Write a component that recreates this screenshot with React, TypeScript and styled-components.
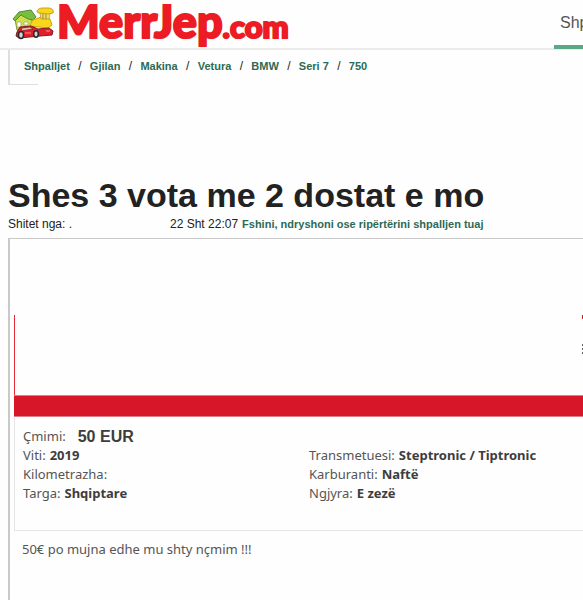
import React, { Fragment } from "react";
import styled, { createGlobalStyle } from "styled-components";

const GlobalStyle = createGlobalStyle`
  *, *::before, *::after { box-sizing: border-box; }
  body {
    margin: 0;
    background: #fefefe;
    color: #222;
    font-family: "Liberation Sans", Arial, sans-serif;
    overflow-x: hidden;
  }
`;

const Page = styled.div`
  display: flex;
  flex-direction: column;
  min-height: 100vh;
`;

const Header = styled.header`
  display: flex;
  justify-content: space-between;
  height: 50px;
  border-bottom: 2px solid #ebebeb;
`;

const Logo = styled.a`
  display: flex;
  align-items: flex-start;
  padding-left: 12px;
  color: #ed1c24;
  text-decoration: none;
  font-family: Lato, "Open Sans", sans-serif;
  font-weight: 900;
  white-space: nowrap;
  -webkit-text-stroke: 2px #ed1c24;
  text-shadow: 0 0 1px #8d1a1e, 0 1px 1px #b9777a;
`;

const LogoArt = styled.svg`
  flex: none;
  width: 42px;
  height: 34px;
  margin: 7px 3px 0 0;
`;

const LogoWords = styled.span`
  display: flex;
  align-items: baseline;
`;

const LogoName = styled.span`
  font-size: 45px;
  line-height: 42px;
`;

const LogoSuffix = styled.span`
  font-size: 31px;
  line-height: 42px;
`;

const Nav = styled.nav`
  display: flex;
  width: 29px;
  overflow: hidden;
  height: 49px;
`;

const NavLink = styled.a`
  flex: none;
  padding: 13px 6px 0;
  border-bottom: 4px solid #5aa982;
  color: #555;
  font-size: 16px;
  line-height: 20px;
  text-decoration: none;
`;

const Crumbs = styled.nav`
  position: relative;
  display: flex;
  gap: 8px;
  height: 35px;
  margin-left: 8px;
  padding: 9px 0 0 14px;
  border-left: 2px solid #dedede;
  font-size: 12px;
  line-height: 14px;

  &::after {
    content: "";
    position: absolute;
    left: 0;
    bottom: 0;
    width: 28px;
    height: 1px;
    background: #dedede;
  }
`;

const Separator = styled.span`
  width: 4px;
  text-align: center;
`;

const GreenLink = styled.a`
  color: #2d6a55;
  font-size: 11px;
  font-weight: bold;
  text-decoration: none;
`;

const Main = styled.main`
  display: flex;
  flex: 1;
  flex-direction: column;
  padding: 90px 0 0 8px;
`;

const Title = styled.h1`
  margin: 0;
  font-size: 34px;
  line-height: 40px;
  white-space: nowrap;
`;

const Meta = styled.div`
  display: flex;
  height: 23px;
  padding-top: 2px;
  font-size: 12px;
  line-height: 14px;
  white-space: nowrap;
`;

const Seller = styled.span`
  width: 162px;
`;

const Posted = styled.span`
  margin-right: 4px;
`;

const Listing = styled.section`
  flex: 1;
  padding: 76px 0 0 4px;
  border: solid #c9c9c9;
  border-width: 1px 0 0 2px;
  color: #555;
  font-family: "Noto Sans", "Open Sans", sans-serif;
  font-size: 13px;
  line-height: 19px;
`;

const Gallery = styled.div`
  display: flex;
  justify-content: flex-end;
  height: 80px;
  border-left: 1px solid #e5283a;
`;

const EdgeMarks = styled.svg`
  width: 1px;
  height: 40px;
`;

const Band = styled.div`
  height: 22px;
  border: solid #df7d88;
  border-width: 1px 0;
  background: #d71729;
`;

const Details = styled.dl`
  display: grid;
  grid-template-columns: 286px 1fr;
  margin: 0;
  padding: 10px 0 27px 8px;
  border: solid #e6e6e6;
  border-width: 0 0 1px 1px;
`;

const Detail = styled.div<{ $wide?: boolean }>`
  display: flex;
  gap: 4px;
  grid-column: ${(p) => (p.$wide ? "1 / -1" : "auto")};
`;

const Term = styled.dt``;

const Value = styled.dd<{ $price?: boolean }>`
  margin: ${(p) => (p.$price ? "0 0 0 8px" : "0")};
  font-family: ${(p) => (p.$price ? '"Liberation Sans", Arial, sans-serif' : "inherit")};
  font-size: ${(p) => (p.$price ? "16px" : "13px")};
  font-weight: bold;
  color: #3d3d3d;
`;

const Description = styled.p`
  margin: 0;
  padding: 9px 8px;
`;

const crumbs = ["Shpalljet", "Gjilan", "Makina", "Vetura", "BMW", "Seri 7", "750"];

const details = [
  ["Viti:", "2019"],
  ["Transmetuesi:", "Steptronic / Tiptronic"],
  ["Kilometrazha:", ""],
  ["Karburanti:", "Naftë"],
  ["Targa:", "Shqiptare"],
  ["Ngjyra:", "E zezë"],
];

function TownArt() {
  return (
    <LogoArt viewBox="0 0 42 34" aria-hidden="true" strokeLinejoin="round">
      <path d="M3 12 9 6l10 5 3 9-17 3z" fill="#cfe04a" stroke="#7d9a3a" />
      <path d="M1 12 7 5l12-2 5 7-3 3-5-1-7-4-6 6z" fill="#78bf3f" stroke="#568a40" />
      <path d="M5 15h4v5H5zM12 15h4v3h-4z" fill="#fff" stroke="#9aaa50" strokeWidth="0.7" />
      <path d="M21 13l8-3 9 2 2 6-4 3-18-2 1-3z" fill="#fbd51a" stroke="#c9a21c" />
      <path d="M28 6l1 6h8l1-6z" fill="#f6e064" stroke="#b58f18" strokeWidth="0.7" />
      <path d="M31 6v6M34 6v6" stroke="#7d6c2c" strokeWidth="0.8" />
      <path d="M25 5c0-3 3-4 6-4l5 0c4 0 6 2 5 5l-5 1-9-1z" fill="#fbd51a" stroke="#c9a21c" />
      <path d="M5 25l3-5 11-1 7 3 11-1 4 3-1 4-12 1-21 2-3-2z" fill="#e31e28" stroke="#7c1d22" />
      <path d="M10 21l8-1 3 2-12 2z" fill="#e9b9b5" stroke="#7c1d22" strokeWidth="0.7" />
      <g fill="#d4d4d4" stroke="#292929" strokeWidth="1.5">
        <ellipse cx="9" cy="28" rx="2.5" ry="3.5" />
        <ellipse cx="24" cy="27" rx="2.3" ry="3.2" />
      </g>
      <path d="M34 24h4M13 26h6" stroke="#ffb4a7" strokeWidth="0.8" />
    </LogoArt>
  );
}

export default function App() {
  return (
    <Page>
      <GlobalStyle />
      <Header>
        <Logo href="#">
          <TownArt />
          <LogoWords>
            <LogoName>MerrJep</LogoName>
            <LogoSuffix>.com</LogoSuffix>
          </LogoWords>
        </Logo>
        <Nav>
          <NavLink href="#">Shp</NavLink>
        </Nav>
      </Header>
      <Crumbs aria-label="Breadcrumb">
        {crumbs.map((name, i) => (
          <Fragment key={name}>
            {i > 0 && <Separator>/</Separator>}
            <GreenLink href="#">{name}</GreenLink>
          </Fragment>
        ))}
      </Crumbs>
      <Main>
        <Title>Shes 3 vota me 2 dostat e mo</Title>
        <Meta>
          <Seller>Shitet nga: .</Seller>
          <Posted>22 Sht 22:07</Posted>
          <GreenLink href="#">Fshini, ndryshoni ose ripërtërini shpalljen tuaj</GreenLink>
        </Meta>
        <Listing>
          <Gallery>
            <EdgeMarks viewBox="0 0 1 40" aria-hidden="true">
              <path d="M0 0h1v4H0z" fill="#d71729" />
              <path d="M0 29h1v2H0zM0 33h1v2H0zM0 37h1v2H0z" fill="#666" />
            </EdgeMarks>
          </Gallery>
          <Band />
          <Details>
            <Detail $wide>
              <Term>Çmimi:</Term>
              <Value $price>50 EUR</Value>
            </Detail>
            {details.map(([term, value]) => (
              <Detail key={term}>
                <Term>{term}</Term>
                <Value>{value}</Value>
              </Detail>
            ))}
          </Details>
          <Description>50€ po mujna edhe mu shty nçmim !!!</Description>
        </Listing>
      </Main>
    </Page>
  );
}
